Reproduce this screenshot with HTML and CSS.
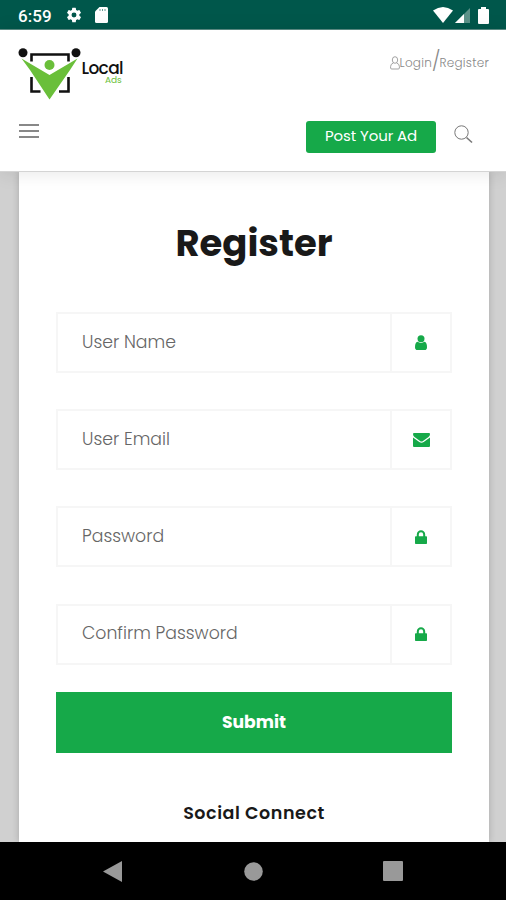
FILE: index.html
```html
<!DOCTYPE html>
<html lang="en">
<head>
<meta charset="utf-8">
<title>Register</title>
<link rel="stylesheet" href="styles.css">
</head>
<body>
<div class="statusbar">
  <span class="clock">6:59</span>
  <svg class="gear" width="18" height="18" viewBox="0 0 24 24"><path fill="#fff" d="M19.14 12.94c.04-.3.06-.61.06-.94s-.02-.64-.07-.94l2.03-1.58a.5.5 0 0 0 .12-.61l-1.92-3.32a.5.5 0 0 0-.59-.22l-2.39.96a7 7 0 0 0-1.62-.94l-.36-2.54a.5.5 0 0 0-.48-.41h-3.84a.5.5 0 0 0-.47.41l-.36 2.54c-.59.24-1.13.57-1.62.94l-2.39-.96a.5.5 0 0 0-.59.22L2.74 8.87a.5.5 0 0 0 .12.61l2.03 1.58a7 7 0 0 0 0 1.88l-2.03 1.58a.5.5 0 0 0-.12.61l1.92 3.32c.12.22.37.29.59.22l2.39-.96c.5.38 1.03.7 1.62.94l.36 2.54c.05.24.24.41.48.41h3.84c.24 0 .44-.17.47-.41l.36-2.54c.59-.24 1.13-.56 1.62-.94l2.39.96c.22.08.47 0 .59-.22l1.92-3.32a.5.5 0 0 0-.12-.61zM12 15.3a3.3 3.3 0 1 1 0-6.6 3.3 3.3 0 0 1 0 6.6z"/></svg>
  <svg class="card-icon" width="13" height="16" viewBox="0 0 13 16"><path fill="#fff" d="M4.5 0H11.5Q13 0 13 1.5V14.5Q13 16 11.5 16H1.5Q0 16 0 14.5V4.500z"/><path stroke="#00574b" stroke-width="1" opacity=".6" d="M5 2v2M7.500 2v2M10 2v2"/></svg>
  <svg class="wifi" width="20" height="16" viewBox="0 0 20 16"><path fill="#fff" d="M0 3.500Q10-3.500 20 3.500L10 16z"/></svg>
  <svg class="signal" width="15" height="15" viewBox="0 0 15 15"><path fill="#5c9289" d="M15 0V15H0z"/><path fill="#fff" d="M9 6V15H0z"/></svg>
  <svg class="battery" width="11" height="17" viewBox="0 0 11 17"><path fill="#fff" d="M3 0h5v2h2q1 0 1 1v13q0 1-1 1H1q-1 0-1-1V3q0-1 1-1h2z"/></svg>
</div>

<header class="header">
  <div class="topline">
    <svg class="logo" width="108" height="54" viewBox="0 0 108 54">
      <path fill="none" stroke="#111" stroke-width="2.600" d="M13.500 13.500V6.500H50.500V13.500M13.500 29V43.500H22.500M50.500 29V43.500H41"/>
      <path fill="#6abf3a" d="M3.500 10.500L31.500 27 59.500 10.500 52 22 31.500 51.500 12 22z"/>
      <circle cx="31.500" cy="17" r="5" fill="#6abf3a"/>
      <circle cx="5" cy="4.800" r="4.500" fill="#111"/><circle cx="58" cy="4.800" r="4.500" fill="#111"/>
      <text class="logo-name" x="63.500" y="25.500">Local</text>
      <text class="logo-sub" x="87" y="35">Ads</text>
    </svg>
    <div class="account">
      <svg width="10" height="14" viewBox="0 0 10 14" fill="none" stroke="#999" stroke-width=".9"><ellipse cx="5" cy="4" rx="2.700" ry="3.300"/><path d="M3.300 7Q.6 8 .6 10.500V12Q.6 13 1.800 13H8.200Q9.400 13 9.400 12V10.500Q9.400 8 6.700 7"/></svg>
      <span>Login</span><i class="slash">/</i><span class="reg">Register</span>
    </div>
  </div>
  <div class="actions">
    <div class="menu"><span></span><span></span><span></span></div>
    <div class="post">Post Your Ad</div>
    <svg class="search" width="19" height="19" viewBox="0 0 19 19" fill="none" stroke="#777"><circle cx="7.500" cy="7.500" r="6.700"/><path stroke-width="1.600" d="M12.500 12.500L18 17.500"/></svg>
  </div>
</header>

<main class="page">
  <section class="panel">
    <h1>Register</h1>
    <div class="fields">
      <div class="field"><span>User Name</span><div class="cell"><svg width="12" height="15" viewBox="0 0 12 15" fill="#16a949"><circle cx="6" cy="3.700" r="3.500"/><path d="M2.500 6.800Q6 9 9.500 6.800Q12 7.500 12 12.200Q12 15 9.500 15H2.500Q0 15 0 12.200Q0 7.500 2.500 6.800z"/></svg></div></div>
      <div class="field"><span>User Email</span><div class="cell"><svg width="17" height="14" viewBox="0 0 17 14" fill="#16a949"><path d="M0 1Q0 0 1 0h15Q17 0 17 1 17 3 15.500 4L10 8Q8.500 9.200 7 8L1.500 4Q0 3 0 1z"/><path d="M0 4.500L6.300 9Q8.500 10.600 10.700 9L17 4.500V13Q17 14 16 14H1Q0 14 0 13z"/></svg></div></div>
      <div class="field"><span>Password</span><div class="cell"><svg width="12" height="14" viewBox="0 0 12 14"><path fill="none" stroke="#16a949" stroke-width="2" d="M2.800 7V4.500a3.200 3.200 0 0 1 6.400 0V7"/><rect y="6.300" width="12" height="7.700" rx=".8" fill="#16a949"/></svg></div></div>
      <div class="field"><span>Confirm Password</span><div class="cell"><svg width="12" height="14" viewBox="0 0 12 14"><path fill="none" stroke="#16a949" stroke-width="2" d="M2.800 7V4.500a3.200 3.200 0 0 1 6.400 0V7"/><rect y="6.300" width="12" height="7.700" rx=".8" fill="#16a949"/></svg></div></div>
    </div>
    <div class="submit">Submit</div>
    <h2>Social Connect</h2>
  </section>
</main>

<nav class="navbar">
  <svg width="19" height="21" viewBox="0 0 19 21"><path fill="#999" d="M19 0V21L0 10.500z"/></svg>
  <svg class="home" width="19" height="19" viewBox="0 0 19 19"><circle cx="9.500" cy="9.500" r="9.300" fill="#999"/></svg>
  <svg width="20" height="20" viewBox="0 0 20 20"><rect width="20" height="20" rx="1" fill="#999"/></svg>
</nav>
</body>
</html>
```
FILE: styles.css
```css
* { box-sizing: border-box; }
body {
  margin: 0;
  width: 506px;
  height: 900px;
  overflow: hidden;
  display: flex;
  flex-direction: column;
  background: #fff;
  font-family: Poppins, Inter, sans-serif;
}
svg { display: block; flex: none; }
.statusbar {
  height: 30px;
  flex: none;
  background: #00574b;
  border-bottom: 1px solid #5c8d85;
  display: flex;
  align-items: center;
  padding: 1px 17px 0 18px;
}
.clock { font: 500 17px/20px Roboto, sans-serif; color: #fff; width: 47px; letter-spacing: .1px; padding-top: 1px; }
.card-icon { margin-left: 12px; }
.wifi { margin: -1px 0 0 auto; }
.signal { margin: 1px 0 0 2px; }
.battery { margin-left: 8px; }

.header {
  position: relative;
  height: 142px;
  flex: none;
  background: #fff;
  border-bottom: 1px solid #d4d4d4;
  box-shadow: 0 1px 18px rgba(0, 0, 0, .1);
  padding: 18px 16px 0 18px;
}
.topline { display: flex; justify-content: space-between; height: 73px; }
.logo { overflow: visible; }
.logo-name { font: 500 17px Poppins, Inter, sans-serif; fill: #111; letter-spacing: -.65px; }
.logo-sub { font: 400 9px Poppins, Inter, sans-serif; fill: #6abf3a; letter-spacing: -.1px; }
.account {
  display: flex;
  align-items: center;
  height: 30px;
  margin-right: 1px;
  color: #888;
  font-size: 12px;
  font-weight: 300;
  letter-spacing: .25px;
}
.slash { font-style: normal; font-size: 19px; line-height: 20px; margin: -3px -1px 0 0; letter-spacing: 0; }
.actions { display: flex; align-items: flex-start; }
.menu { display: flex; flex-direction: column; gap: 4px; width: 20px; margin: 3px auto 0 1px; }
.menu span { height: 2px; background: #888; }
.post {
  width: 130px;
  height: 32px;
  border-radius: 3px;
  background: #16a949;
  color: #fff;
  font-size: 15px;
  line-height: 29px;
  letter-spacing: -.1px;
  text-align: center;
}
.search { margin: 4px 17px 0 18px; }

.page { flex: 1; min-height: 0; overflow: hidden; background: #d0d0d0; padding: 0 17px 0 19px; }
.panel {
  height: 100%;
  background: #fff;
  box-shadow: 0 0 7px rgba(0, 0, 0, .2);
  padding: 0 37px;
}
h1 {
  margin: 0;
  padding-top: 45px;
  font-size: 37px;
  line-height: 52px;
  font-weight: 700;
  color: #191919;
  text-align: center;
}
.fields { display: flex; flex-direction: column; gap: 36.200px; margin-top: 43px; }
.field {
  height: 61px;
  border: 2px solid #f6f6f6;
  display: flex;
  align-items: center;
  justify-content: space-between;
  padding-left: 24px;
  color: #666;
  font-size: 17.300px;
  font-weight: 300;
}
.field > span { padding-bottom: 2px; white-space: nowrap; }
.cell {
  width: 60px;
  height: 57px;
  border-left: 2px solid #f6f6f6;
  display: flex;
  align-items: center;
  justify-content: center;
}
.submit {
  height: 61px;
  margin-top: 27px;
  background: #16a949;
  color: #fff;
  font-size: 17.200px;
  font-weight: 700;
  line-height: 60px;
  text-align: center;
}
h2 {
  margin: 47px 0 0;
  font-size: 17.500px;
  line-height: 26px;
  font-weight: 600;
  letter-spacing: .55px;
  color: #191919;
  text-align: center;
}
.navbar {
  height: 58px;
  flex: none;
  background: #000;
  display: flex;
  align-items: center;
  justify-content: space-between;
  padding: 0 103px;
}
.home { margin-left: 1px; }
```
